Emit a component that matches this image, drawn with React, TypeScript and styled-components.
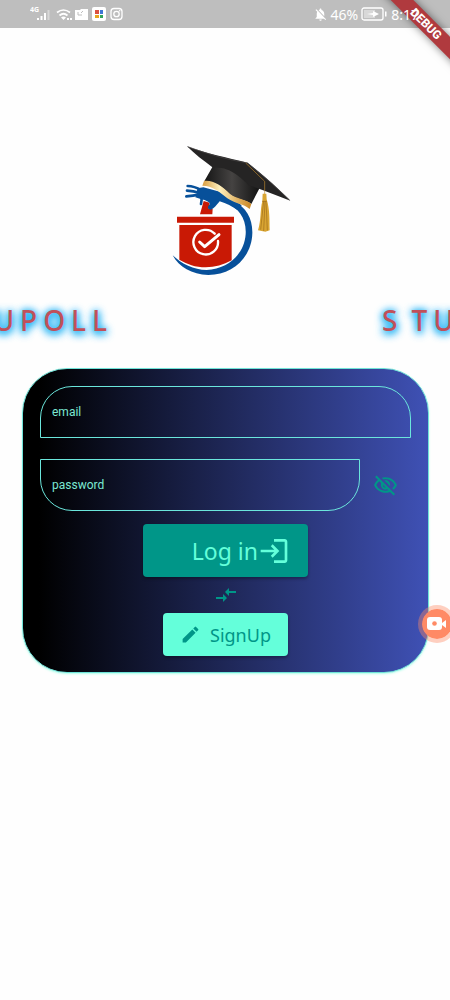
import React from "react";
import styled, { createGlobalStyle } from "styled-components";
import { MdCompareArrows, MdEdit, MdLogin, MdNotificationsOff, MdOutlineVisibilityOff } from "react-icons/md";

const GlobalStyle = createGlobalStyle`
  * { box-sizing: border-box; }
  body { margin: 0; background: #fff; font-family: Roboto, sans-serif; }
  button, input { font-family: inherit; }
`;

const mint = "#64ffda";
const teal = "#009688";

const Screen = styled.div`
  position: relative;
  min-height: 100vh;
  overflow: hidden;
  background: #fefefe;
`;

const StatusBar = styled.header`
  display: flex;
  align-items: center;
  justify-content: space-between;
  height: 28px;
  padding: 0 31px 0 30px;
  background: #bebebe;
  color: #fff;
  font-family: "Noto Sans", sans-serif;
  font-size: 14px;
`;

const StatusGroup = styled.div`
  display: flex;
  align-items: center;
  gap: 3px;
  white-space: nowrap;
`;

const Clock = styled.span`
  position: relative;
  z-index: 1;
`;

const BannerCorner = styled.div`
  position: absolute;
  top: 0;
  right: 0;
  width: 80px;
  height: 80px;
  overflow: hidden;
  pointer-events: none;
`;

const Banner = styled.div`
  position: absolute;
  top: 16px;
  right: -36px;
  width: 120px;
  height: 16px;
  transform: rotate(45deg);
  background: #b03a3e;
  box-shadow: 0 0 8px rgba(0, 0, 0, 0.5);
  color: #fff;
  font-size: 12px;
  font-weight: 800;
  line-height: 16px;
  text-align: center;
`;

const LogoArea = styled.div`
  display: flex;
  justify-content: center;
  padding-top: 107px;
`;

const Marquee = styled.div`
  display: flex;
  justify-content: space-between;
  height: 70px;
  overflow: hidden;
  color: #c0505a;
  font-family: "Noto Sans", sans-serif;
  font-size: 28px;
  font-weight: 500;
  line-height: 70px;
  letter-spacing: 6px;
  white-space: nowrap;
  text-shadow: 0 2px 10px #03a9f4, 0 2px 10px #03a9f4, 0 1px 6px #29b6f6;
`;

const MarqueeEnd = styled.div`
  display: flex;
  justify-content: flex-end;
  width: 113px;
`;

const MarqueeStart = styled.div`
  width: 68px;
`;

const Initial = styled.span`
  margin-right: 8px;
`;

const Card = styled.form`
  display: flex;
  flex-direction: column;
  align-items: center;
  margin: 13px 21px 0 22px;
  padding: 17px 17px 16px;
  border: 1px solid #6fe3d8;
  border-radius: 45px;
  background: linear-gradient(90deg, #000 4%, #3f51b5);
  box-shadow: 0 1px 2px rgba(100, 255, 218, 0.5);
`;

const Field = styled.input<{ $rounded: "top" | "bottom" }>`
  flex: 1;
  min-width: 0;
  height: 52px;
  padding: 0 11px;
  border: 1px solid #6be6dc;
  border-radius: ${(p) => (p.$rounded === "top" ? "32px 32px 0 0" : "0 0 32px 32px")};
  outline: none;
  background: transparent;
  color: ${mint};
  font-size: 12px;
  &::placeholder { color: #7be8d3; opacity: 1; }
`;

const FieldRow = styled.div`
  display: flex;
  align-items: center;
  align-self: stretch;
  margin-bottom: 21px;
  & + & { margin-bottom: 13px; }
`;

const IconButton = styled.button`
  display: flex;
  align-items: center;
  justify-content: center;
  width: 51px;
  height: 48px;
  padding: 0;
  border: 0;
  background: none;
  color: ${teal};
`;

const ActionButton = styled.button`
  display: flex;
  align-items: center;
  border: 0;
  border-radius: 4px;
  white-space: nowrap;
  box-shadow: 0 2px 3px rgba(0, 0, 0, 0.3);
`;

const LoginButton = styled(ActionButton)`
  justify-content: flex-end;
  width: 165px;
  height: 53px;
  padding: 0 18px 0 0;
  background: ${teal};
  color: ${mint};
  font-family: "Noto Sans", sans-serif;
  font-size: 23px;
`;

const SignUpButton = styled(ActionButton)`
  justify-content: center;
  gap: 9px;
  width: 125px;
  height: 43px;
  padding: 0;
  background: ${mint};
  color: ${teal};
  font-family: "Noto Sans", sans-serif;
  font-size: 18px;
`;

const Swap = styled.div`
  display: flex;
  margin: 6px 0;
  color: ${teal};
`;

const RecordButton = styled.button`
  position: absolute;
  top: 605px;
  right: -6px;
  display: flex;
  align-items: center;
  justify-content: center;
  width: 38px;
  height: 38px;
  padding: 0;
  border: 4px solid rgba(255, 138, 101, 0.4);
  border-radius: 50%;
  background: #ff8a65;
  background-clip: padding-box;
`;

const StatusIcons = () => (
  <svg width="94" height="20" viewBox="0 0 94 20" fill="#fff" aria-hidden="true">
    <text x="0" y="8" fontSize="7" fontWeight="700">4G</text>
    <path d="M7 14h2v2H7zM10.500 12h2v4h-2zM14 9h2v7h-2z" />
    <path d="M17.500 6h2v10h-2z" opacity=".4" />
    <g fill="none" stroke="#fff" strokeWidth="1.700">
      <path d="M27 8.500q6.500-5 13 0M29.500 11.500q4-3.500 8 0" />
    </g>
    <path d="M31 13.500q2.500-2 5 0L33.500 16zM37 14h2v2h-2zM40 14h2v2h-2z" />
    <path d="M45 6h5l1-1h7v11H45z" />
    <path d="M48 8v3h4M51 9l2-2" stroke="#bebebe" fill="none" />
    <rect x="62" y="3" width="14" height="14" rx="2" />
    <path fill="#db5141" d="M65 6h4v4h-4z" />
    <path fill="#3d75d5" d="M70 6h3v4h-3z" />
    <path fill="#e9a51d" d="M65 11h4v3h-4z" />
    <path fill="#32a45a" d="M70 11h3v3h-3z" />
    <g fill="none" stroke="#fff" strokeWidth="1.300">
      <rect x="81" y="4.500" width="11" height="11" rx="3" />
      <circle cx="86.500" cy="10" r="2.700" />
    </g>
    <circle cx="89.700" cy="6.800" r=".8" />
  </svg>
);

const Battery = () => (
  <svg width="27" height="14" viewBox="0 0 27 14" aria-hidden="true">
    <rect x="1" y="1" width="21" height="12" rx="2" fill="none" stroke="#fff" strokeWidth="1.300" />
    <path d="M3 3h11v8H3z" fill="#fff" opacity=".4" />
    <path d="M6 7l6-1V4l6 3-6 3V8zM24 4.500h1.500v5H24z" fill="#fff" />
  </svg>
);

const Camera = () => (
  <svg width="20" height="14" viewBox="0 0 20 14" aria-hidden="true">
    <rect x="0" y="0" width="15" height="13" rx="3" fill="#fff" />
    <path d="M15 6l4-3v8l-4-3z" fill="#fff" />
    <circle cx="7.500" cy="6.500" r="2.300" fill="#ff8a65" />
  </svg>
);

const Logo = () => (
  <svg width="160" height="150" viewBox="-45 0 480 450" role="img" aria-label="Stupoll">
    <defs>
      <linearGradient id="cap" x1="0" x2="1">
        <stop offset="0" stopColor="#151515" />
        <stop offset=".5" stopColor="#454342" />
        <stop offset="1" stopColor="#121212" />
      </linearGradient>
      <linearGradient id="gold" x1="0" x2="1">
        <stop offset="0" stopColor="#d89c3f" />
        <stop offset=".35" stopColor="#fff0bd" />
        <stop offset="1" stopColor="#c98521" />
      </linearGradient>
    </defs>
    <path fill="#07509a" d="M222 199C259 218 278 251 277 295C275 366 219 420 145 420C95 419 57 396 38 361C65 387 101 405 140 405C205 402 253 357 257 298C260 250 235 219 200 204Z" />
    <path fill="#c91905" d="M51 245H222V263H51zM58 270H215V376C190 390 165 397 137 397C107 397 80 387 58 374zM131 198L149 203L146 221L158 222L157 238H120z" />
    <g fill="none" stroke="#07509a" strokeWidth="8" strokeLinecap="round">
      <path d="M83 153Q103 153 124 166" />
      <path d="M81 167Q100 168 120 174" />
      <path d="M79 184Q98 182 120 178" />
      <path d="M124 180Q126 196 123 207" />
    </g>
    <path fill="#07509a" d="M112 160L130 157L185 172L245 211L233 226C217 215 199 205 179 199C169 210 163 222 151 224C142 223 142 215 149 208C151 202 142 199 134 195L124 193L106 187L110 176Z" />
    <g fill="none" stroke="#fff" strokeWidth="7" strokeLinecap="round" strokeLinejoin="round">
      <path d="M164 296A37 37 0 1 0 174 318" />
      <path d="M119 321L134 335L177 299" strokeWidth="9" />
    </g>
    <path fill="url(#cap)" d="M161 89L132 140C159 136 189 157 211 179C231 195 255 191 274 207L300 157L258 105Z" />
    <path fill="url(#gold)" d="M132 138C158 134 186 153 210 177C230 193 256 191 274 207L269 222C250 206 226 207 202 190C176 169 158 152 127 152Z" />
    <path fill="#252424" d="M81 34C137 55 200 68 263 83C306 117 350 155 391 197C350 182 307 163 266 151C247 130 205 91 159 98C130 77 104 57 81 34Z" />
    <path d="M83 35Q173 69 262 84Q328 136 389 195" fill="none" stroke="#4b4948" strokeWidth="2" />
    <path d="M257 84L314 139V180" fill="none" stroke="#b9852d" strokeWidth="2" />
    <path fill="#d9a532" d="M308 176L319 176L320 193C330 225 328 256 329 286L316 290L294 286C304 255 300 225 307 199Z" />
    <path d="M311 198L302 284M315 198L311 288M318 198L322 286M306 199H320" fill="none" stroke="#9f6d18" strokeWidth="2" />
  </svg>
);

export default function App() {
  return (
    <Screen>
      <GlobalStyle />
      <StatusBar>
        <StatusIcons />
        <StatusGroup>
          <MdNotificationsOff size={15} />
          <span>46%</span>
          <Battery />
          <Clock>8:17</Clock>
        </StatusGroup>
      </StatusBar>
      <BannerCorner>
        <Banner>DEBUG</Banner>
      </BannerCorner>
      <main>
        <LogoArea>
          <Logo />
        </LogoArea>
        <Marquee>
          <MarqueeEnd>STUPOLL</MarqueeEnd>
          <MarqueeStart>
            <Initial>S</Initial>TUPOLL
          </MarqueeStart>
        </Marquee>
        <Card onSubmit={(e) => e.preventDefault()}>
          <FieldRow>
            <Field $rounded="top" type="email" placeholder="email" aria-label="email" />
          </FieldRow>
          <FieldRow>
            <Field $rounded="bottom" type="password" placeholder="password" aria-label="password" />
            <IconButton type="button" aria-label="Show password">
              <MdOutlineVisibilityOff size={25} />
            </IconButton>
          </FieldRow>
          <LoginButton type="submit">
            Log in
            <MdLogin size={32} />
          </LoginButton>
          <Swap>
            <MdCompareArrows size={24} />
          </Swap>
          <SignUpButton type="button">
            <MdEdit size={21} />
            SignUp
          </SignUpButton>
        </Card>
      </main>
      <RecordButton type="button" aria-label="Record screen">
        <Camera />
      </RecordButton>
    </Screen>
  );
}
